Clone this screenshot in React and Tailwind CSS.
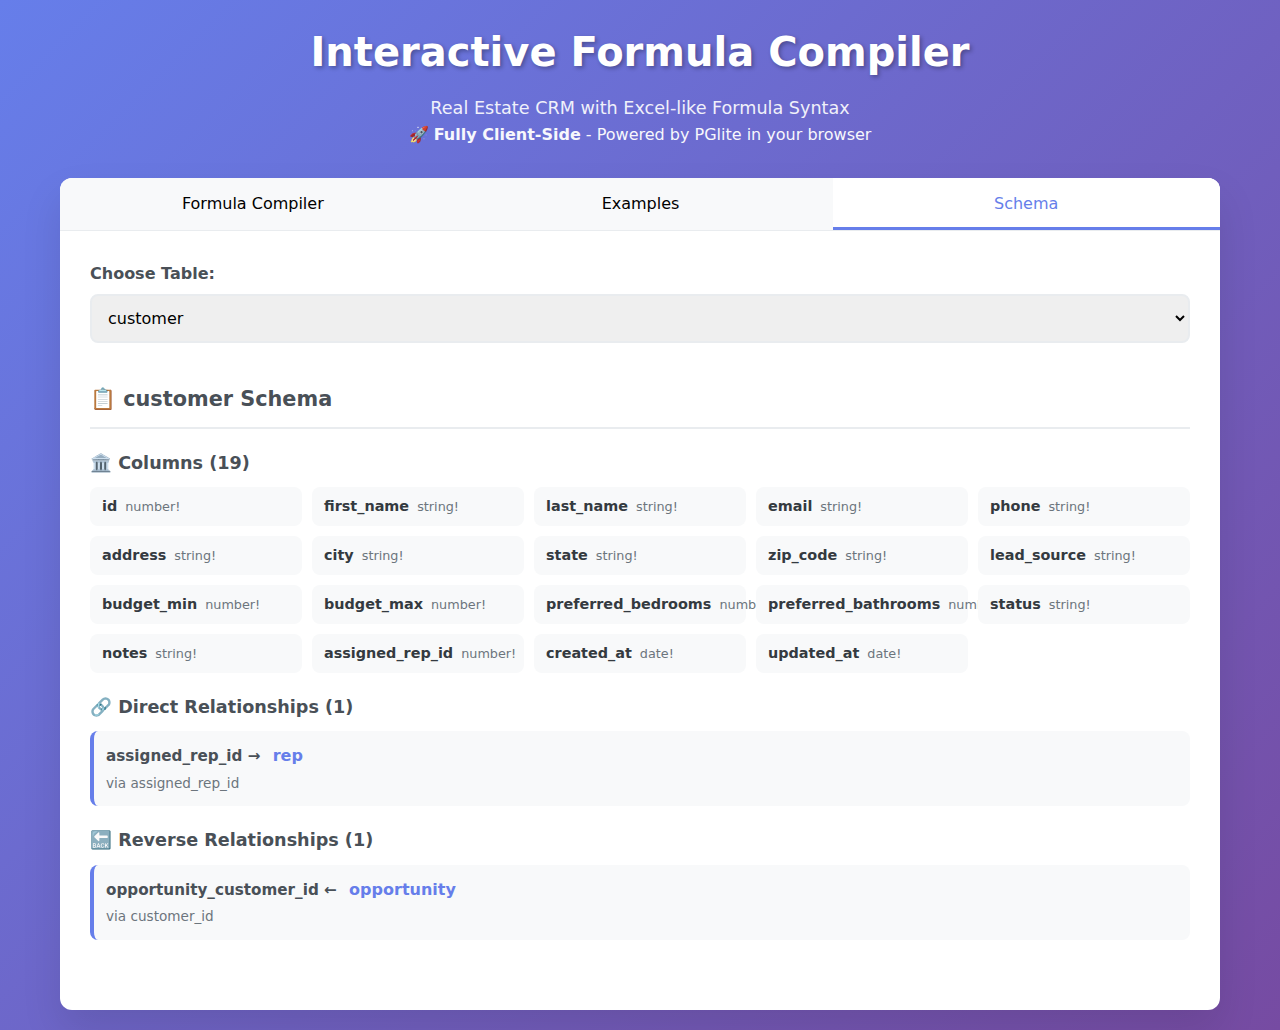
const columns = [
  ['id', 'number!'],
  ['first_name', 'string!'],
  ['last_name', 'string!'],
  ['email', 'string!'],
  ['phone', 'string!'],
  ['address', 'string!'],
  ['city', 'string!'],
  ['state', 'string!'],
  ['zip_code', 'string!'],
  ['lead_source', 'string!'],
  ['budget_min', 'number!'],
  ['budget_max', 'number!'],
  ['preferred_bedrooms', 'number!'],
  ['preferred_bathrooms', 'number!'],
  ['status', 'string!'],
  ['notes', 'string!'],
  ['assigned_rep_id', 'number!'],
  ['created_at', 'date!'],
  ['updated_at', 'date!'],
]

function Relationship({ field, arrow, table, via }) {
  return (
    <div className="bg-[#f8f9fa] border-l-4 border-[#667eea] rounded-lg px-3 pt-[13px] h-[75px]">
      <div className="text-[15.2px] leading-[24px] font-bold text-[#495057] whitespace-pre">
        {field} {arrow} <span className="text-[16px] text-[#667eea] ml-[7px]">{table}</span>
      </div>
      <div className="text-[13.6px] leading-[17px] mt-[6.7px] text-[#6c757d]">{via}</div>
    </div>
  )
}

export default function App() {
  return (
    <div className="min-h-[1030px] bg-[linear-gradient(135deg,#667eea_0%,#764ba2_100%)] p-5 font-['DejaVu_Sans',sans-serif]">
      <header className="text-center text-white mb-[34px]">
        <h1 className="text-[40px] leading-[47px] font-bold mt-[9px] mb-[22px] [text-shadow:2px_2px_4px_rgba(0,0,0,0.3)]">
          Interactive Formula Compiler
        </h1>
        <p className="text-[17.6px] leading-[21px] opacity-90">Real Estate CRM with Excel-like Formula Syntax</p>
        <p className="text-[16px] leading-[19px] mt-[6px] opacity-95">
          🚀 <strong>Fully Client-Side</strong> - Powered by PGlite in your browser
        </p>
      </header>

      <main className="mx-[40px] h-[832px] bg-white rounded-xl overflow-hidden shadow-[0_20px_40px_rgba(0,0,0,0.1)]">
        <div className="flex bg-[#f8f9fa] border-b border-[#e9ecef] h-[53px]">
          <button className="flex-1 pt-[2px] pr-[1px] text-[16px] text-black border-b-[3px] border-transparent">Formula Compiler</button>
          <button className="flex-1 pt-[2px] pl-[1px] text-[16px] text-black border-b-[3px] border-transparent">Examples</button>
          <button className="flex-1 pt-[2px] pr-[1px] text-[16px] text-[#667eea] bg-white border-b-[3px] border-[#667eea]">Schema</button>
        </div>

        <div className="px-[30px] pt-[33px]">
          <label className="block text-[16px] leading-[19px] font-bold text-[#495057] mb-[11px]">Choose Table:</label>
          <select className="w-full h-[49px] pl-[12px] pr-[16px] text-[16px] text-black bg-[#efefef] border-2 border-[#e9ecef] rounded-lg">
            <option>customer</option>
          </select>

          <h2 className="mt-[40px] pb-[11px] border-b-2 border-[#e9ecef] text-[20.8px] leading-[33px] font-bold text-[#495057]">
            📋 customer Schema
          </h2>

          <h3 className="mt-[21px] mb-[10px] text-[17.6px] leading-[27px] font-bold text-[#495057]">🏛️ Columns (19)</h3>
          <div className="grid grid-cols-5 gap-[10px]">
            {columns.map(([name, type]) => (
              <div key={name} className="flex items-center gap-2 h-[39px] px-3 bg-[#f8f9fa] rounded-lg whitespace-nowrap">
                <span className="text-[14.4px] font-bold text-[#343a40]">{name}</span>
                <span className="text-[12.8px] text-[#6c757d]">{type}</span>
              </div>
            ))}
          </div>

          <h3 className="mt-[21px] mb-[10.4px] text-[17.6px] leading-[27px] font-bold text-[#495057]">🔗 Direct Relationships (1)</h3>
          <Relationship field="assigned_rep_id" arrow="→" table="rep" via="via assigned_rep_id" />

          <h3 className="mt-[21px] mb-[10.2px] text-[17.6px] leading-[27px] font-bold text-[#495057]">🔙 Reverse Relationships (1)</h3>
          <Relationship field="opportunity_customer_id" arrow="←" table="opportunity" via="via customer_id" />
        </div>
      </main>
    </div>
  )
}
